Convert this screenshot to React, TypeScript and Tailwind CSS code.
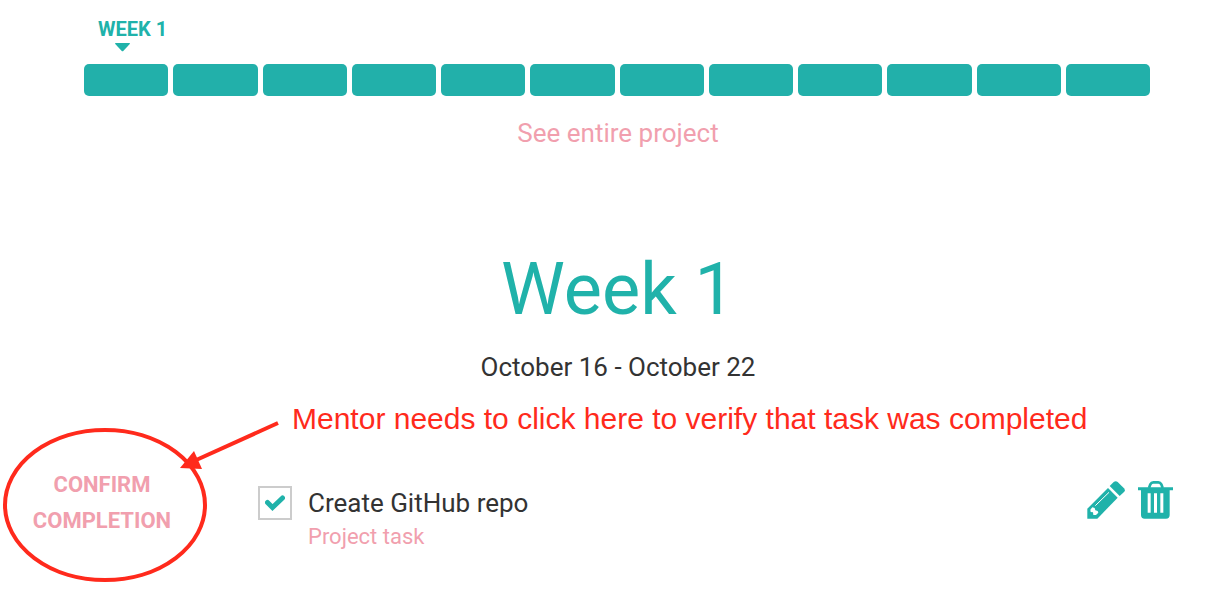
import React from "react";

const weeks = Array.from({ length: 12 }, (_, i) => i + 1);

function Progress() {
  return (
    <nav aria-label="Project weeks" className="pr-14 pl-21">
      <div className="flex h-16 flex-col items-start pt-4">
        <div className="ml-[14px] text-xl leading-[26px] font-bold whitespace-nowrap">WEEK 1</div>
        <svg viewBox="0 0 15 9" className="mt-px ml-[31px] h-[9px] w-[15px]" aria-hidden="true">
          <path d="M0 .8Q0 0 .8 0H14.200Q15 0 15 .8L8.500 7.800Q7.500 8.800 6.500 7.800Z" fill="#20b2aa" />
        </svg>
      </div>
      <div className="flex gap-[5px]">
        {weeks.map((week) => (
          <button key={week} type="button" aria-label={`Week ${week}`} className="h-8 flex-1 rounded-[5px] bg-[#22b0aa]" />
        ))}
      </div>
    </nav>
  );
}

function Pencil() {
  return (
    <svg viewBox="141 65 114 114" className="size-[38px]" aria-hidden="true">
      <path d="M142 178V148L204 86L233 115L172 178Z" fill="#20b2aa" />
      <path d="M209 80L221 68Q227 63 233 68L252 87Q257 93 252 98L239 110Z" fill="#20b2aa" />
      <path d="M166 139L207 99" stroke="#fff" strokeWidth="3" />
      <path d="M151 151L157 144L164 146L166 153L173 155L175 160L168 167L160 167L159 159L152 158Z" fill="#fff" />
    </svg>
  );
}

function Trash() {
  return (
    <svg viewBox="295 64 105 114" className="h-[38px] w-[35px]" aria-hidden="true">
      <path d="M328 85L332 74Q335 68 341 68H356Q362 68 365 74L369 85" fill="none" stroke="#20b2aa" strokeWidth="8" />
      <path d="M295 83H400V92H390V166Q390 177 379 177H315Q304 177 304 166V92H295Z" fill="#20b2aa" />
      <path d="M324 101H333V159H324ZM343 101H352V159H343ZM362 101H371V159H362Z" fill="#fff" />
    </svg>
  );
}

export default function App() {
  return (
    <main className="relative min-h-screen bg-white font-[Roboto,sans-serif] text-[#20b2aa]">
      <Progress />
      <div className="flex flex-col items-center pt-[21px] pr-[54px] pl-21">
        <a href="#project" className="text-[26px] leading-8 text-[#f19fae]">See entire project</a>
        <h1 className="mt-[95px] text-7xl leading-[92px]">Week 1</h1>
        <p className="mt-[15px] text-[26px] leading-8 text-[#333]">October 16 - October 22</p>
      </div>
      <p className="mt-5 pl-[292px] font-['Liberation_Sans',Arial,sans-serif] text-[30px] leading-8 whitespace-nowrap text-[#ff2a1c]">
        Mentor needs to click here to verify that task was completed
      </p>
      <section className="mt-8 flex items-start pr-[33px]">
        <button type="button" className="ml-6 w-[156px] text-[22px] leading-9 font-bold text-[#f19fae]">
          CONFIRM COMPLETION
        </button>
        <label className="mt-[18px] ml-[78px] flex items-start gap-4">
          <span className="mt-px grid size-[34px] place-items-center">
            <input type="checkbox" defaultChecked className="peer col-start-1 row-start-1 size-[34px] appearance-none border-2 border-[#ccc] bg-white" />
            <svg viewBox="0 0 20 16" className="pointer-events-none invisible col-start-1 row-start-1 h-4 w-5 peer-checked:visible" aria-hidden="true">
              <path d="M2.500 7.500L7.500 12.500L17.500 3" fill="none" stroke="#20b2aa" strokeWidth="5" strokeLinecap="round" strokeLinejoin="miter" />
            </svg>
          </span>
          <span className="flex flex-col">
            <span className="text-[26px] leading-9 text-[#333]">Create GitHub repo</span>
            <span className="text-[22px] leading-8 text-[#f19fae]">Project task</span>
          </span>
        </label>
        <div className="mt-[14px] ml-auto flex gap-[13px]">
          <button type="button" aria-label="Edit task"><Pencil /></button>
          <button type="button" aria-label="Delete task"><Trash /></button>
        </div>
      </section>
      <svg viewBox="0 0 290 170" className="pointer-events-none absolute top-[420px] left-0 h-[170px] w-[290px]" aria-hidden="true">
        <ellipse cx="105" cy="85" rx="100" ry="75" fill="none" stroke="#ff2a1c" strokeWidth="4" />
        <path d="M278 3L194 41" stroke="#ff2a1c" strokeWidth="4" />
        <path d="M180 48L194 31L202 49Z" fill="#ff2a1c" />
      </svg>
    </main>
  );
}
